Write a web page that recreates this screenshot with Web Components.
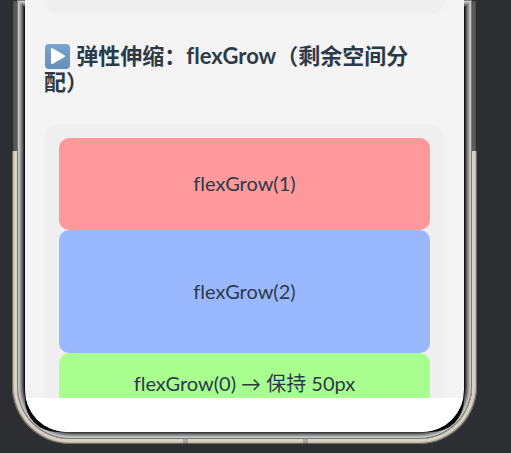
<!DOCTYPE html>
<html lang="zh-CN">
<head>
<meta charset="UTF-8">
<meta name="viewport" content="width=device-width, initial-scale=1">
<title>flexGrow</title>
<style>
    body {
        margin: 0;
        height: 100vh;
        overflow: hidden;
        background: #2d2e32;
        color: #2c3a48;
        font-family: Lato, "Noto Sans CJK SC", sans-serif;
        font-variant-ligatures: none;
        text-spacing-trim: space-all;
    }
</style>
</head>
<body>
<phone-frame>
    <demo-panel class="previous"></demo-panel>
    <demo-heading>弹性伸缩：flexGrow（剩余空间分配）</demo-heading>
    <demo-panel>
        <flex-item grow="1" color="#ff999b">flexGrow(1)</flex-item>
        <flex-item grow="2" color="#99b8ff">flexGrow(2)</flex-item>
        <flex-item grow="0" color="#a8ff90">flexGrow(0) → 保持 50px</flex-item>
    </demo-panel>
</phone-frame>

<script>
class PhoneFrame extends HTMLElement {
    constructor() {
        super();
        this.attachShadow({ mode: "open" });
        this.shadowRoot.innerHTML = `
        <style>
            :host {
                display: block;
                box-sizing: border-box;
                height: 100vh;
                padding: 0 34px 9px 12px;
            }
            .rim {
                box-sizing: border-box;
                height: 100%;
                padding: 0 5px 5px;
                border-radius: 0 0 58px 58px;
                background:
                    linear-gradient(#b0aca2, #b0aca2) 171px 100% / 5px 5px no-repeat,
                    linear-gradient(#b0aca2, #b0aca2) 291px 100% / 5px 5px no-repeat,
                    linear-gradient(#5a5a58 151px, #d8d2c3 151px);
                box-shadow: inset 0 0 0 1px #0006, inset 0 0 0 2px #0002;
            }
            /* metal edge: one ring per pixel, from light outside to black inside */
            .bezel {
                box-sizing: border-box;
                height: 100%;
                padding: 0 8px 7px;
                border-radius: 0 0 53px 53px;
                background: #101010;
                box-shadow:
                    inset 0 0 0 1px #7b7973,
                    inset 0 0 0 2px #c9cbcb,
                    inset 0 0 0 3px #b2b3b3,
                    inset 0 0 0 4px #999,
                    inset 0 0 0 5px #7c7c7c,
                    inset 0 0 0 6px #5c5c5c,
                    inset 0 0 0 7px #383838;
            }
            /* rounder screen over squarer black: the corners stay dark */
            .shade {
                height: 100%;
                border-radius: 0 0 32px 32px;
                background: #080808;
            }
            .screen {
                display: flex;
                flex-direction: column;
                height: 100%;
                overflow: hidden;
                border-radius: 0 0 42px 42px;
                background: #f4f4f4;
            }
            .view {
                flex: 1;
                min-height: 0;
                overflow: hidden;
                padding: 0 19px;
            }
            .bar {
                height: 34px;
                background: #fff;
            }
        </style>
        <div class="rim"><div class="bezel"><div class="shade"><div class="screen">
            <div class="view"><slot></slot></div>
            <div class="bar"></div>
        </div></div></div></div>
        `;
    }
}
customElements.define("phone-frame", PhoneFrame);


class DemoHeading extends HTMLElement {
    constructor() {
        super();
        this.attachShadow({ mode: "open" });
        this.shadowRoot.innerHTML = `
        <style>
            :host {
                display: block;
                margin: 29px 0;
            }
            h2 {
                margin: 0;
                font-size: 22px;
                line-height: 26px;
                font-weight: bold;
                word-break: break-all;
            }
            svg {
                width: 27px;
                height: 26px;
                vertical-align: top;
            }
        </style>
        <h2><svg viewBox="0 0 27 26" aria-hidden="true">
            <defs><linearGradient id="g" x1="0" y1="0" x2="0" y2="1">
                <stop offset="0" stop-color="#78a6d0"/><stop offset="1" stop-color="#648fbb"/>
            </linearGradient></defs>
            <rect x="1" y="1" width="25" height="25" rx="4" fill="url(#g)"/>
            <path d="M8.500 5.200 20.500 12.200Q21.800 13 20.500 13.900L8.500 20.900Q7 21.500 7 20V6.200Q7 4.600 8.500 5.200Z" fill="#fff"/>
        </svg> <slot></slot></h2>
        `;
    }
}
customElements.define("demo-heading", DemoHeading);


class DemoPanel extends HTMLElement {
    constructor() {
        super();
        this.attachShadow({ mode: "open" });
        this.shadowRoot.innerHTML = `
        <style>
            :host {
                display: flex;
                flex-direction: column;
                box-sizing: border-box;
                height: 305px;
                padding: 14px 15px 15px;
                border-radius: 16px;
                background: #efefef;
            }
            /* scrolled almost out of view */
            :host(.previous) {
                height: 14px;
                padding: 0;
                border-radius: 0 0 14px 14px;
            }
        </style>
        <slot></slot>
        `;
    }
}
customElements.define("demo-panel", DemoPanel);


class FlexItem extends HTMLElement {
    constructor() {
        super();
        this.attachShadow({ mode: "open" });
        const grow = this.getAttribute("grow") || "0";
        const color = this.getAttribute("color") || "#ddd";
        this.shadowRoot.innerHTML = `
        <style>
            :host {
                display: flex;
                align-items: center;
                justify-content: center;
                box-sizing: border-box;
                flex: ${grow} 0 61px;
                padding-bottom: 2px;
                border-radius: 10px;
                background: ${color};
                font-size: 20px;
                line-height: 24px;
            }
        </style>
        <slot></slot>
        `;
    }
}
customElements.define("flex-item", FlexItem);
</script>
</body>
</html>
